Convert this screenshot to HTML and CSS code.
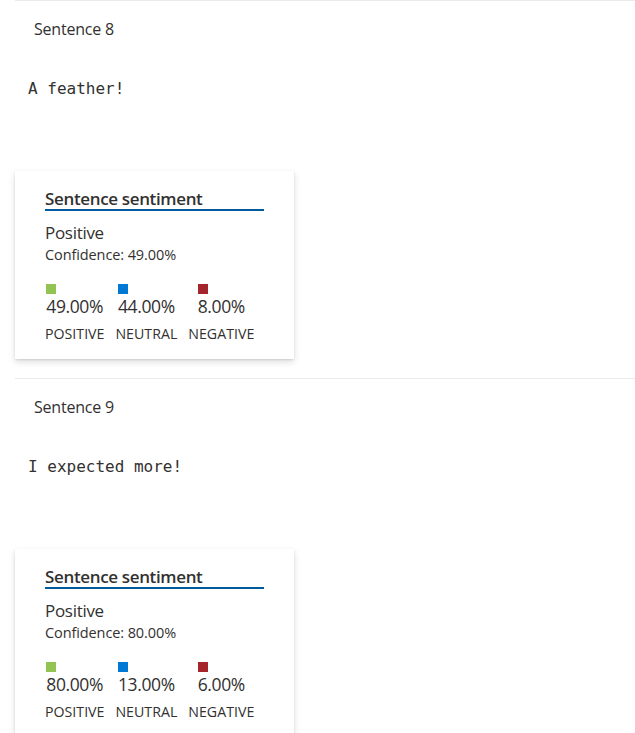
FILE: index.html
```html
<!DOCTYPE html>
<html>
<head>
<meta charset="utf-8">
<link rel="stylesheet" href="styles.css">
</head>
<body>
<div class="list">
  <section class="sentence">
    <div class="sentence-label">Sentence 8</div>
    <div class="sentence-text">A feather!</div>
    <div class="card">
      <div class="card-title">Sentence sentiment</div>
      <div class="overall">Positive</div>
      <div class="confidence">Confidence: 49.00%</div>
      <div class="scores">
        <div class="score">
          <div class="score-inner">
            <span class="swatch swatch-pos"></span>
            <div class="score-value">49.00%</div>
          </div>
          <div class="score-label">POSITIVE</div>
        </div>
        <div class="score">
          <div class="score-inner">
            <span class="swatch swatch-neu"></span>
            <div class="score-value">44.00%</div>
          </div>
          <div class="score-label">NEUTRAL</div>
        </div>
        <div class="score">
          <div class="score-inner">
            <span class="swatch swatch-neg"></span>
            <div class="score-value">8.00%</div>
          </div>
          <div class="score-label">NEGATIVE</div>
        </div>
      </div>
    </div>
  </section>
  <section class="sentence">
    <div class="sentence-label">Sentence 9</div>
    <div class="sentence-text">I expected more!</div>
    <div class="card">
      <div class="card-title">Sentence sentiment</div>
      <div class="overall">Positive</div>
      <div class="confidence">Confidence: 80.00%</div>
      <div class="scores">
        <div class="score">
          <div class="score-inner">
            <span class="swatch swatch-pos"></span>
            <div class="score-value">80.00%</div>
          </div>
          <div class="score-label">POSITIVE</div>
        </div>
        <div class="score">
          <div class="score-inner">
            <span class="swatch swatch-neu"></span>
            <div class="score-value">13.00%</div>
          </div>
          <div class="score-label">NEUTRAL</div>
        </div>
        <div class="score">
          <div class="score-inner">
            <span class="swatch swatch-neg"></span>
            <div class="score-value">6.00%</div>
          </div>
          <div class="score-label">NEGATIVE</div>
        </div>
      </div>
    </div>
  </section>
</div>
</body>
</html>
```
FILE: styles.css
```css
html, body {
  margin: 0;
  padding: 0;
  background: #ffffff;
}
body {
  font-family: "Segoe UI", "Open Sans", "Noto Sans", sans-serif;
  color: #323130;
  overflow: hidden;
}
.list {
  padding-left: 15px;
}
.sentence {
  border-top: 1px solid #edebe9;
  padding-bottom: 19px;
}
.sentence-label {
  margin-top: 17px;
  padding-left: 19px;
  font-size: 16px;
  line-height: 22px;
  letter-spacing: -0.2px;
}
.sentence-text {
  margin-top: 39px;
  padding-left: 13px;
  font-family: "DejaVu Sans Mono", "Liberation Mono", monospace;
  font-size: 16px;
  line-height: 20px;
  color: #323130;
}
.card {
  margin-top: 72px;
  width: 219px;
  padding: 16px 30px 16px 30px;
  background: #ffffff;
  box-shadow: 0 3.2px 7.2px 0 rgba(0,0,0,0.13), 0 0.6px 1.8px 0 rgba(0,0,0,0.11);
}
.card-title {
  padding-top: 1px;
  font-size: 17px;
  font-weight: 600;
  line-height: 21px;
  border-bottom: 2px solid #005a9e;
  letter-spacing: -0.35px;
}
.overall {
  margin-top: 11px;
  font-size: 17px;
  line-height: 22px;
  letter-spacing: -0.3px;
}
.confidence {
  margin-top: 2px;
  font-size: 14.5px;
  line-height: 18px;
  letter-spacing: -0.1px;
}
.scores {
  margin-top: 20px;
  display: flex;
  gap: 11px;
}
.score {
  display: flex;
  flex-direction: column;
  align-items: center;
}
.score-inner {
  text-align: left;
}
.swatch {
  display: block;
  width: 10px;
  height: 10px;
}
.swatch-pos { background: #92c353; }
.swatch-neu { background: #0078d4; }
.swatch-neg { background: #a4262c; }
.score-value {
  padding-top: 1px;
  font-size: 17.5px;
  line-height: 22px;
  letter-spacing: -0.4px;
}
.score-label {
  margin-top: 8px;
  font-size: 14.2px;
  line-height: 18px;
  letter-spacing: 0px;
}
```
